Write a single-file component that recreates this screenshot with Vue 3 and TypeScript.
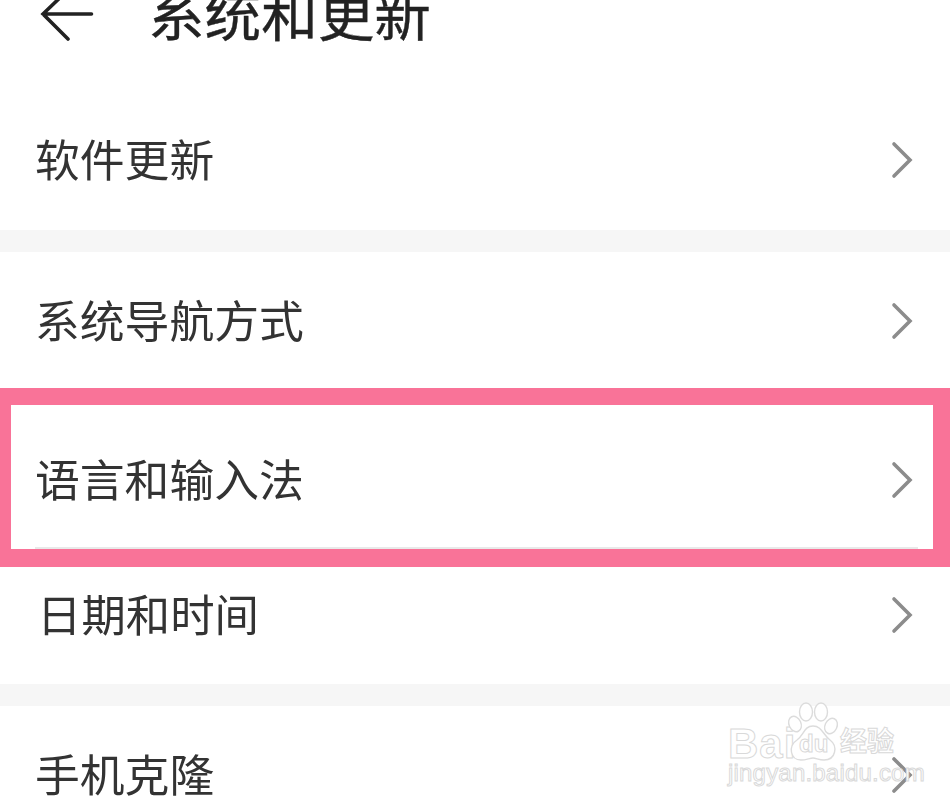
<script setup lang="ts">
interface Row {
  label: string
  variant: string
}

const rows: Row[] = [
  { label: '软件更新', variant: 'r-update' },
  { label: '系统导航方式', variant: 'r-nav' },
  { label: '语言和输入法', variant: 'r-lang' },
  { label: '日期和时间', variant: 'r-date' },
  { label: '手机克隆', variant: 'r-clone' },
]
</script>

<template>
  <div class="page">
    <div class="soft">
      <header class="head">
        <svg class="back" viewBox="0 0 56 60" width="56" height="60" aria-hidden="true">
          <path d="M28 2 L3 26 L28 51 M3 26 H51.5" fill="none" stroke="#222" stroke-width="3.6" stroke-linecap="round" stroke-linejoin="miter" />
        </svg>
        <h1 class="title">系统和更新</h1>
      </header>

      <div v-for="row in rows" :key="row.label" class="row" :class="row.variant">
        <span class="label">{{ row.label }}</span>
        <svg class="chev" viewBox="0 0 24 38" width="24" height="38" aria-hidden="true">
          <path d="M4 3 L20 19 L4 35" fill="none" stroke="#8c8c8c" stroke-width="3.6" stroke-linecap="round" stroke-linejoin="miter" />
        </svg>
      </div>
    </div>

    <div class="mark"></div>

    <div class="wm">
      <span class="wm-bai">Bai</span>
      <svg class="wm-paw" viewBox="0 0 54 62" width="54" height="62" aria-hidden="true">
        <g fill="#fff" stroke="#dcdcdc" stroke-width="1.4">
          <ellipse cx="9" cy="22" rx="6" ry="8" transform="rotate(-25 9 22)" />
          <ellipse cx="20" cy="10" rx="6.5" ry="9" />
          <ellipse cx="35" cy="10" rx="6.5" ry="9" />
          <ellipse cx="45" cy="24" rx="6" ry="8" transform="rotate(25 45 24)" />
          <path d="M27 24 C36 24 37 33 44 38 C52 44 50 58 38 58 C33 58 30 56 27 56 C24 56 20 58 15 58 C4 58 2 44 11 38 C18 33 18 24 27 24 Z" />
        </g>
      </svg>
      <span class="wm-du">du</span>
      <span class="wm-cn">经验</span>
      <span class="wm-url">jingyan.baidu.com</span>
    </div>
  </div>
</template>

<style>
html,
body {
  margin: 0;
  background: #fff;
  overflow: hidden;
}
</style>

<style scoped>
.page {
  position: relative;
  width: 950px;
  height: 806px;
  overflow: hidden;
  background: #fff;
  font-family: "Noto Sans CJK SC", "Noto Sans", sans-serif;
}

.soft {
  filter: blur(0.5px);
}

.head {
  display: flex;
  align-items: center;
  height: 92px;
  padding-left: 40px;
  box-sizing: border-box;
}

.back {
  flex: none;
  margin-top: -56px;
}

.title {
  margin: -71px 0 0 52px;
  font-size: 56.6px;
  line-height: 60px;
  font-weight: 400;
  color: #222;
  -webkit-text-stroke: 0.4px #222;
}

.row {
  display: flex;
  align-items: center;
  justify-content: space-between;
  box-sizing: border-box;
  padding: 0 36px 0 35px;
  background: #fff;
}

.label {
  margin-top: -6px;
  font-size: 44.8px;
  line-height: 60px;
  color: #333;
}

.chev {
  flex: none;
  margin-top: -2px;
}

.r-update {
  height: 160px;
  border-bottom: 22px solid #f6f6f6;
}

.r-nav {
  height: 140px;
}

.r-lang {
  height: 178px;
}

.r-date {
  height: 136px;
  padding: 0 36px 22px 37px;
  border-bottom: 22px solid #f6f6f6;
}

.r-date .label {
  font-size: 44.4px;
}

.r-clone {
  height: 140px;
}

.mark {
  position: absolute;
  left: 0;
  top: 388px;
  width: 950px;
  height: 179px;
  box-sizing: border-box;
  border-style: solid;
  border-color: #f97398;
  border-width: 17px 17px 18px 11px;
}

.mark::after {
  content: "";
  position: absolute;
  left: 24px;
  right: 15px;
  bottom: 0;
  height: 2px;
  background: #e9e9e9;
}

.wm {
  position: absolute;
  left: 726px;
  top: 702px;
  width: 180px;
  height: 84px;
  color: #fff;
  font-family: "Liberation Sans", sans-serif;
  -webkit-text-stroke: 1px #d9d9d9;
}

.wm-bai {
  position: absolute;
  left: 2px;
  top: 20px;
  font-size: 42px;
  line-height: 44px;
  font-weight: 700;
  letter-spacing: 1px;
}

.wm-paw {
  position: absolute;
  left: 60px;
  top: 0;
}

.wm-du {
  position: absolute;
  left: 73px;
  top: 28px;
  font-size: 24px;
  line-height: 28px;
  font-weight: 700;
}

.wm-cn {
  position: absolute;
  left: 114px;
  top: 18px;
  font-family: "Noto Sans CJK SC", sans-serif;
  font-size: 27px;
  line-height: 40px;
  font-weight: 700;
  white-space: nowrap;
}

.wm-url {
  position: absolute;
  left: 2px;
  top: 56px;
  font-size: 24px;
  line-height: 30px;
  white-space: nowrap;
  letter-spacing: 0.2px;
}
</style>
